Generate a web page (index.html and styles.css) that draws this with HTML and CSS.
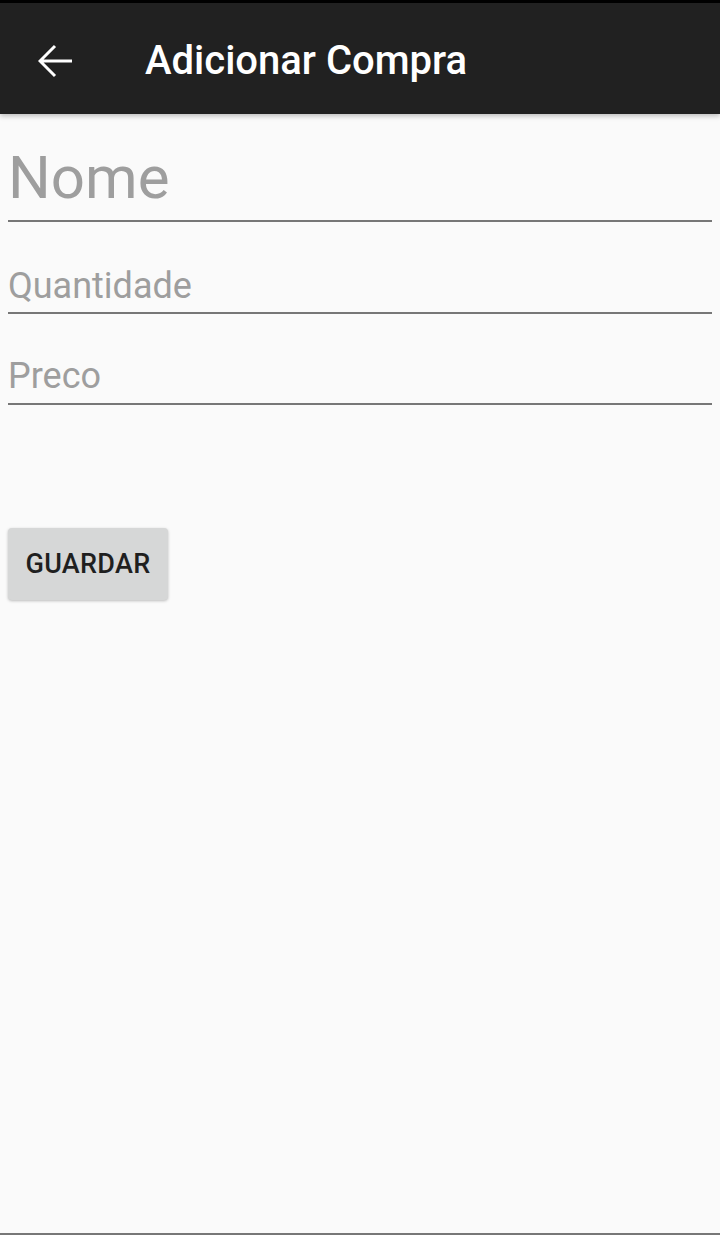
FILE: index.html
```html
<!DOCTYPE html>
<html lang="pt">
<head>
<meta charset="utf-8">
<title>Adicionar Compra</title>
<link rel="stylesheet" href="styles.css">
</head>
<body>
<div class="screen">
  <header class="toolbar">
    <span class="back">
      <svg width="36" height="34" viewBox="0 0 36 34"><path d="M2 17H34M17 2L2 17L17 32" fill="none" stroke="#fff" stroke-width="3" stroke-linecap="butt" stroke-linejoin="miter"/></svg>
    </span>
    <h1 class="title">Adicionar Compra</h1>
  </header>
  <main class="form">
    <div class="field field-big"><span class="hint">Nome</span></div>
    <div class="field field-q"><span class="hint">Quantidade</span></div>
    <div class="field field-p"><span class="hint">Preco</span></div>
    <button class="btn">GUARDAR</button>
  </main>
</div>
</body>
</html>
```
FILE: styles.css
```css
html, body {
  margin: 0;
  padding: 0;
  background: #fafafa;
}
body {
  font-family: Roboto, "Noto Sans", sans-serif;
}
.screen {
  height: 1235px;
  box-sizing: border-box;
  border-bottom: 2px solid #777;
  display: flex;
  flex-direction: column;
  background: #fafafa;
}
.toolbar {
  height: 111px;
  border-top: 3px solid #000;
  background: #212121;
  display: flex;
  align-items: center;
  box-shadow: 0 2px 5px rgba(0,0,0,0.25);
  position: relative;
  z-index: 1;
}
.back {
  width: 36px;
  height: 34px;
  margin-left: 38px;
  margin-top: 5px;
  display: flex;
}
.title {
  margin: 4px 0 0 71px;
  color: #fff;
  font-size: 40px;
  font-weight: 500;
  letter-spacing: 0;
}
.form {
  padding: 0 8px;
  display: flex;
  flex-direction: column;
}
.field {
  border-bottom: 2px solid #777;
  color: #9e9e9e;
}
.hint {
  display: block;
}
.field-big {
  margin-top: 29px;
  font-size: 60px;
  line-height: 70px;
  padding-bottom: 7px;
}
.field-q {
  margin-top: 43px;
  font-size: 36px;
  line-height: 42px;
  padding-bottom: 5px;
}
.field-p {
  margin-top: 41px;
  font-size: 36px;
  line-height: 42px;
  padding-bottom: 6px;
}
.btn {
  align-self: flex-start;
  margin-top: 123px;
  width: 160px;
  height: 72px;
  border: none;
  border-radius: 4px;
  background: #d6d7d7;
  color: #1f1f1f;
  font-family: Roboto, sans-serif;
  font-size: 27px;
  font-weight: 500;
  letter-spacing: 0.3px;
  box-shadow: 0 1px 3px rgba(0,0,0,0.25);
  padding: 0;
}
```
